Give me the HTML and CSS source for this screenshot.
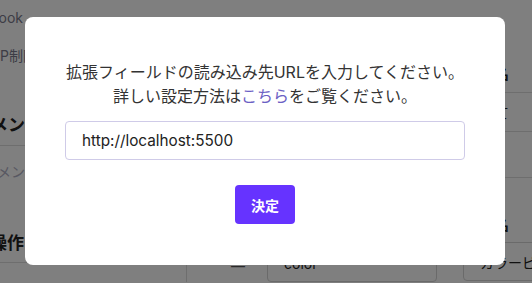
FILE: index.html
```html
<!DOCTYPE html>
<html lang="ja">
<head>
    <meta charset="utf-8">
    <title>拡張フィールド設定</title>
    <link rel="stylesheet" href="styles.css">
</head>
<body>
<div class="page">
    <div class="side">
        <div class="side-item link fb"><span>Facebook</span></div>
        <div class="side-item link ip"><span>IP制限</span></div>
        <div class="side-item heading first"><span>コメント</span></div>
        <div class="side-item muted"><span>コメント</span></div>
        <div class="side-item heading second"><span>操作</span></div>
    </div>
    <div class="main">
        <div class="row">
            <div class="cell cell-name"></div>
            <div class="cell cell-dash">—</div>
            <div class="cell cell-input"><div class="fake-input">color</div></div>
        </div>
    </div>
    <div class="aside">
        <div class="aside-item label"><span>表示名</span></div>
        <div class="aside-item note"><span>について</span></div>
        <div class="aside-item empty"></div>
        <div class="aside-item label second"><span>表示名</span></div>
        <div class="fake-input aside-input">カラーピッカー</div>
    </div>
</div>

<div class="overlay">
    <div class="modal">
        <p class="message">拡張フィールドの読み込み先URLを入力してください。<br>詳しい設定方法は<a href="#">こちら</a>をご覧ください。</p>
        <input class="url" type="text" value="http://localhost:5500">
        <button class="submit">決定</button>
    </div>
</div>
</body>
</html>
```

FILE: styles.css
```css
body {
    margin: 0;
    font-family: Inter, "Noto Sans CJK JP", sans-serif;
    color: #222;
    background: #fff;
}

.page {
    display: flex;
    height: 283px;
    overflow: hidden;
}

/* left column, mostly hidden by the modal */
.side {
    width: 45px;
    margin-right: -20px;
    overflow: hidden;
    flex-shrink: 0;
}

.side-item {
    display: flex;
    justify-content: flex-end;
    white-space: nowrap;
}

.side-item.link {
    font-size: 14px;
    line-height: 16px;
    color: #7a7a8c;
}

.side-item.fb {
    margin-top: 10px;
    padding-right: 22px;
}

.side-item.ip {
    margin-top: 22px;
    padding-right: 8px;
}

.side-item.heading {
    font-size: 17px;
    font-weight: bold;
    line-height: 22px;
    color: #222;
    padding-bottom: 9px;
    border-bottom: 1px solid #dcdcdc;
}

.side-item.heading.first {
    margin-top: 50px;
    padding-right: 3px;
}

.side-item.heading.second {
    margin-top: 50px;
    padding-bottom: 8px;
    padding-right: 21px;
}

.side-item.muted {
    margin-top: 16px;
    padding-right: 6px;
    font-size: 14px;
    line-height: 20px;
    color: #b0b0c4;
}

.main {
    flex: 1;
    display: flex;
    flex-direction: column;
    justify-content: flex-end;
}

.row {
    display: flex;
    height: 39px;
    margin-bottom: 1px;
}

.cell-name {
    width: 161px;
    border-right: 1px solid #dcdcdc;
}

.cell-dash {
    box-sizing: border-box;
    width: 80px;
    padding-right: 22px;
    text-align: right;
    font-size: 14px;
    line-height: 46px;
    color: #555;
}

.fake-input {
    box-sizing: border-box;
    height: 39px;
    border: 1px solid #d4d4d4;
    border-radius: 4px;
    padding: 0 16px;
    font-size: 14px;
    line-height: 39px;
    color: #222;
    white-space: nowrap;
}

.cell-input {
    width: 170px;
}

/* right column */
.aside {
    width: 69px;
    flex-shrink: 0;
    overflow: hidden;
}

.aside-item {
    display: flex;
    justify-content: flex-end;
    padding-right: 23px;
    white-space: nowrap;
    border-bottom: 1px solid #dcdcdc;
    font-size: 14px;
}

.aside-item.label {
    margin-top: 54px;
    height: 38px;
    align-items: center;
    font-weight: bold;
}

.aside-item.note {
    height: 38px;
    align-items: center;
}

.aside-item.empty {
    height: 45px;
}

.aside-item.label.second {
    margin-top: 27px;
    height: 37px;
    border-bottom: none;
}

.aside-input {
    width: 90px;
    padding-left: 16px;
}

/* modal */
.overlay {
    position: fixed;
    inset: 0;
    background: rgba(0, 0, 0, 0.5);
    display: flex;
    align-items: flex-start;
    padding: 17px 0 0 25px;
}

.modal {
    box-sizing: border-box;
    width: 480px;
    height: 248px;
    background: #fff;
    border-radius: 8px;
    padding: 43px 40px 0;
    text-align: center;
}

.message {
    margin: 0;
    font-size: 16px;
    line-height: 24px;
    color: #333;
}

.message a {
    color: #6b60c4;
    text-decoration: none;
}

.url {
    display: block;
    box-sizing: border-box;
    width: 100%;
    height: 39px;
    margin-top: 13px;
    border: 1px solid #cfcbe8;
    border-radius: 4px;
    padding: 0 16px;
    font-family: Inter, sans-serif;
    font-size: 15.3px;
    color: #222;
    outline: none;
}

.submit {
    margin-top: 25px;
    height: 39px;
    padding: 0 16px;
    border: none;
    border-radius: 4px;
    background: #6633ff;
    color: #fff;
    font-family: "Noto Sans CJK JP", sans-serif;
    font-size: 14px;
    font-weight: bold;
    cursor: pointer;
}
```
